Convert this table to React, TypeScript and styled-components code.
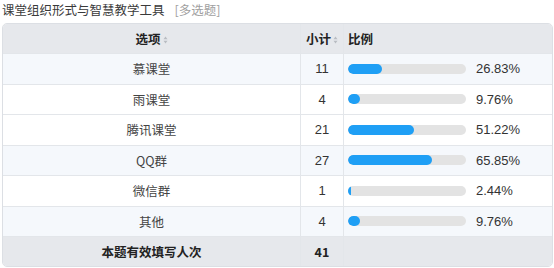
import React from 'react'
import styled, { createGlobalStyle } from 'styled-components'

const GlobalStyle = createGlobalStyle`
  html, body {
    margin: 0;
    padding: 0;
    background: #fff;
  }
  body {
    font-family: "Liberation Sans", "Noto Sans CJK SC", sans-serif;
    color: #333;
  }
`

type Row = { name: string; count: number; percent: number }

const rows: Row[] = [
  { name: '慕课堂', count: 11, percent: 26.83 },
  { name: '雨课堂', count: 4, percent: 9.76 },
  { name: '腾讯课堂', count: 21, percent: 51.22 },
  { name: 'QQ群', count: 27, percent: 65.85 },
  { name: '微信群', count: 1, percent: 2.44 },
  { name: '其他', count: 4, percent: 9.76 },
]

const striped = [true, false, false, true, false, true]

function SortIcon() {
  return (
    <Sort viewBox="0 0 6 10" aria-hidden>
      <path d="M3 0.5 L5.5 4 H0.5 Z" fill="#b8bcc2" />
      <path d="M3 9.5 L5.5 6 H0.5 Z" fill="#b8bcc2" />
    </Sort>
  )
}

export default function App() {
  return (
    <>
      <GlobalStyle />
      <Page>
        <Title>
          课堂组织形式与智慧教学工具<Kind>[多选题]</Kind>
        </Title>
        <Table>
          <colgroup>
            <col style={{ width: 298 }} />
            <col style={{ width: 43 }} />
            <col />
          </colgroup>
          <thead>
            <tr>
              <Head $align="center">
                选项<SortIcon />
              </Head>
              <Head $align="center">
                小计<SortIcon />
              </Head>
              <Head $align="left">比例</Head>
            </tr>
          </thead>
          <tbody>
            {rows.map((r, i) => (
              <BodyRow key={r.name} $light={striped[i]}>
                <NameCell>{r.name}</NameCell>
                <CountCell>{r.count}</CountCell>
                <RatioCell>
                  <Ratio>
                    <Track>
                      <Fill style={{ width: Math.max(r.percent * 1.28, 3) }} />
                    </Track>
                    <Percent>{r.percent.toFixed(2)}%</Percent>
                  </Ratio>
                </RatioCell>
              </BodyRow>
            ))}
          </tbody>
          <tfoot>
            <tr>
              <FootCell>本题有效填写人次</FootCell>
              <FootCell>41</FootCell>
              <FootCell />
            </tr>
          </tfoot>
        </Table>
      </Page>
    </>
  )
}

const Page = styled.div`
  width: 554px;
  height: 268px;
  padding: 2px 1px 0 2px;
  box-sizing: border-box;
  overflow: hidden;
`

const Title = styled.div`
  height: 21px;
  font-family: "Noto Sans CJK SC", sans-serif;
  font-size: 12.5px;
  line-height: 16px;
  color: #3a3a3a;
`

const Kind = styled.span`
  margin-left: 10px;
  color: #a0a0a0;
`

const Table = styled.table`
  width: 551px;
  table-layout: fixed;
  border-collapse: separate;
  border-spacing: 0;
  border: 1px solid #dcdfe4;
  border-radius: 5px;
  overflow: hidden;
  font-size: 12.5px;

  td,
  th {
    height: 30px;
    padding: 0;
    border-bottom: 1px solid #e3e6ea;
    border-right: 1px solid #e3e6ea;
    box-sizing: border-box;
  }

  td:last-child,
  th:last-child {
    border-right: none;
  }

  tfoot td {
    height: 29px;
    border-bottom: none;
  }
`

const Head = styled.th<{ $align: 'left' | 'center' }>`
  background: #e6e8ec;
  text-align: ${(p) => p.$align};
  padding-left: ${(p) => (p.$align === 'left' ? '4px' : '0')} !important;
  font-family: "Noto Sans CJK SC", sans-serif;
  font-weight: bold;
  color: #222;
  white-space: nowrap;
`

const Sort = styled.svg`
  width: 5px;
  height: 8px;
  margin-left: 2px;
  vertical-align: 0;
`

const BodyRow = styled.tr<{ $light: boolean }>`
  background: ${(p) => (p.$light ? '#f5f8fc' : '#fff')};

  td {
    height: 30.5px;
  }
`

const NameCell = styled.td`
  text-align: center;
  font-family: "Noto Sans CJK SC", sans-serif;
  color: #444;
`

const CountCell = styled.td`
  text-align: center;
  font-size: 13px;
  color: #333;
`

const RatioCell = styled.td`
  padding-left: 4px !important;
`

const Ratio = styled.div`
  display: flex;
  align-items: center;
`

const Track = styled.div`
  width: 118px;
  height: 10px;
  border-radius: 5px;
  background: #e3e3e3;
  overflow: hidden;
`

const Fill = styled.div`
  height: 100%;
  border-radius: 5px;
  background: #1f9ff5;
`

const Percent = styled.span`
  margin-left: 10px;
  font-size: 13px;
  color: #333;
`

const FootCell = styled.td`
  background: #e6e8ec;
  text-align: center;
  font-family: "Noto Sans CJK SC", sans-serif;
  font-weight: bold;
  color: #222;
`
